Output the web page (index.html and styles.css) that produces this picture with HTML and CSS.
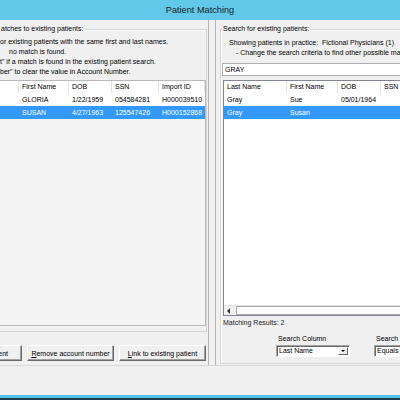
FILE: index.html
```html
<!DOCTYPE html>
<html>
<head>
<meta charset="utf-8">
<title>Patient Matching</title>
<link rel="stylesheet" href="styles.css">
</head>
<body>
<div class="titlebar">Patient Matching</div>
<div class="client">
  <div class="pane-left">
    <fieldset class="group group-left">
      <legend>atches to existing patients:</legend>
      <div class="notes">
        <div>or existing patients with the same first and last names.</div>
        <div class="indent">no match is found.</div>
        <div>t" if a match is found in the existing patient search.</div>
        <div>ber" to clear the value in Account Number.</div>
      </div>
      <div class="list list-left">
        <div class="row head">
          <div class="cell"></div>
          <div class="cell">First Name</div>
          <div class="cell">DOB</div>
          <div class="cell">SSN</div>
          <div class="cell">Import ID</div>
        </div>
        <div class="row">
          <div class="cell"></div>
          <div class="cell">GLORIA</div>
          <div class="cell">1/22/1959</div>
          <div class="cell">054584281</div>
          <div class="cell">H000039510</div>
        </div>
        <div class="row sel">
          <div class="cell"></div>
          <div class="cell">SUSAN</div>
          <div class="cell">4/27/1963</div>
          <div class="cell">125547426</div>
          <div class="cell">H000152868</div>
        </div>
      </div>
    </fieldset>
    <div class="buttons">
      <button class="btn btn-cut">ent</button>
      <button class="btn"><u>R</u>emove account number</button>
      <button class="btn"><u>L</u>ink to existing patient</button>
    </div>
  </div>
  <div class="splitter"></div>
  <div class="pane-right">
    <fieldset class="group group-right">
      <legend>Search for existing patients:</legend>
      <div class="info">Showing patients in practice:&nbsp; Fictional Physicians (1)</div>
      <div class="info info-sub">- Change the search criteria to find other possible matches.</div>
      <div class="textbox">GRAY</div>
      <div class="list list-right">
        <div class="row head">
          <div class="cell">Last Name</div>
          <div class="cell">First Name</div>
          <div class="cell">DOB</div>
          <div class="cell">SSN</div>
          <div class="cell">Phone</div>
        </div>
        <div class="row">
          <div class="cell">Gray</div>
          <div class="cell">Sue</div>
          <div class="cell">05/01/1964</div>
          <div class="cell"></div>
          <div class="cell"></div>
        </div>
        <div class="row sel">
          <div class="cell">Gray</div>
          <div class="cell">Susan</div>
          <div class="cell"></div>
          <div class="cell"></div>
          <div class="cell"></div>
        </div>
        <div class="list-fill"></div>
        <div class="hscroll">
          <div class="sb-btn"><span class="arrow-left"></span></div>
          <div class="sb-thumb"></div>
        </div>
      </div>
      <div class="results">Matching Results: 2</div>
      <div class="search-row">
        <div class="field field-col">
          <div class="field-label">Search Column</div>
          <div class="combo"><span class="combo-text">Last Name</span><span class="combo-btn"><span class="arrow-down"></span></span></div>
        </div>
        <div class="field">
          <div class="field-label">Search Type</div>
          <div class="combo"><span class="combo-text">Equals</span><span class="combo-btn"><span class="arrow-down"></span></span></div>
        </div>
      </div>
    </fieldset>
  </div>
</div>
<div class="footer-space"></div>
<div class="taskbar-edge"></div>
</body>
</html>
```

FILE: styles.css
```css
* { box-sizing: border-box; }
html, body { margin: 0; padding: 0; }
body {
  width: 400px;
  height: 400px;
  overflow: hidden;
  background: #f0f0f0;
  font-family: "Liberation Sans", Arial, sans-serif;
  font-size: 7px;
  color: #000;
  display: flex;
  flex-direction: column;
}

.titlebar {
  flex: none;
  height: 20px;
  background: #62c8ea;
  display: flex;
  align-items: center;
  justify-content: center;
  font-size: 9.2px;
  color: #1b1b1b;
}

.client {
  flex: none;
  height: 346px;
  display: flex;
  border-bottom: 1px solid #d8d8d8;
}

.pane-left {
  flex: none;
  width: 209px;
  border-right: 1px solid #b4b4b4;
  display: flex;
  flex-direction: column;
  overflow: hidden;
}
.splitter { flex: none; width: 6px; }
.pane-right {
  flex: 1;
  min-width: 0;
  border-left: 1px solid #b4b4b4;
  overflow: hidden;
}

.group {
  margin: 0;
  min-width: 0;
  border: 1px solid #d5d5d5;
  box-shadow: inset 1px 1px 0 #fff;
}
.group legend {
  padding: 0 1px;
  line-height: 10px;
  white-space: nowrap;
}

.group-left {
  margin: 4px 0 0 -10px;
  width: 217px;
  height: 308px;
  padding: 3px 0 0 9px;
}
.notes div { line-height: 10px; white-space: nowrap; }
.notes .indent { padding-left: 9px; }

.list {
  border: 1px solid #828790;
  background: #fff;
  display: flex;
  flex-direction: column;
}
.row { display: grid; white-space: nowrap; background: #fff; }
.row .cell {
  overflow: hidden;
  padding-left: 3px;
  height: 13px;
  line-height: 13px;
}
.row.head .cell {
  height: 12px;
  line-height: 12px;
  border-right: 1px solid #e3e3e3;
}
.row.sel { background: #3399ff; color: #fff; }

.list-left {
  margin: 3px 0 0 -31px;
  width: 237px;
  height: 246px;
  background: #f4f4f4;
  border-color: #b9b9b9;
}
.list-left .row { grid-template-columns: 49px 50px 43px 47px 46px; }

.buttons {
  display: flex;
  justify-content: flex-end;
  gap: 5px;
  padding-right: 2px;
  margin-top: 13px;
}
.btn {
  flex: none;
  width: 87px;
  height: 16px;
  padding: 0;
  margin: 0;
  font-family: inherit;
  font-size: 7px;
  color: #000;
  background: #f0f0f0;
  border: 1px solid;
  border-color: #fff #696969 #696969 #fff;
  box-shadow: inset -1px -1px 0 #a0a0a0;
  text-align: center;
}
.btn u { text-decoration: underline; }
.btn-cut { text-align: right; padding-right: 13px; }

.group-right {
  margin: 4px 0 0 4px;
  width: 300px;
  height: 340px;
  padding: 4px 0 0 1px;
}
.info { line-height: 10px; white-space: nowrap; padding-left: 7px; }
.info-sub { padding-left: 14px; }

.textbox {
  margin-top: 5px;
  height: 13px;
  border: 1px solid #abadb3;
  background: #fff;
  line-height: 11px;
  padding-left: 2px;
}

.list-right {
  margin: 4px 0 0 1px;
  height: 236px;
}
.list-right .row { grid-template-columns: 63px 51px 43px 50px 80px; }
.list-fill { flex: 1; }
.hscroll {
  flex: none;
  height: 10px;
  background: #f0f0f0;
  border-top: 1px solid #e0e0e0;
  display: flex;
}
.sb-btn {
  width: 9px;
  display: flex;
  align-items: center;
  justify-content: center;
}
.arrow-left {
  width: 0; height: 0;
  border-top: 3px solid transparent;
  border-bottom: 3px solid transparent;
  border-right: 3px solid #333;
}
.sb-thumb {
  flex: 1;
  margin: 0 0 0 3px;
  background: #fbfbfb;
  border: 1px solid #a9a9a9;
}

.results { margin-top: 2px; line-height: 10px; padding-left: 1px; color: #222; }

.search-row {
  display: flex;
  gap: 24px;
  margin-top: 6px;
  padding-left: 54px;
}
.field { width: 74px; flex: none; }
.field-label { line-height: 10px; padding-left: 2px; }
.combo {
  margin-top: 1px;
  height: 12px;
  display: flex;
  background: #fff;
  border: 1px solid;
  border-color: #a0a0a0 #fff #fff #a0a0a0;
  box-shadow: inset 1px 1px 0 #696969;
}
.combo-text { flex: 1; line-height: 10px; padding-left: 2px; }
.combo-btn {
  flex: none;
  width: 10px;
  margin: 1px 1px 1px 0;
  background: #f0f0f0;
  border: 1px solid;
  border-color: #fff #696969 #696969 #fff;
  display: flex;
  align-items: center;
  justify-content: center;
}
.arrow-down {
  width: 0; height: 0;
  border-left: 2px solid transparent;
  border-right: 2px solid transparent;
  border-top: 2px solid #000;
}

.footer-space { flex: 1; }
.taskbar-edge {
  flex: none;
  height: 5px;
  background: #52c2e8;
  border-bottom: 2px solid #1d3b4a;
}
```
